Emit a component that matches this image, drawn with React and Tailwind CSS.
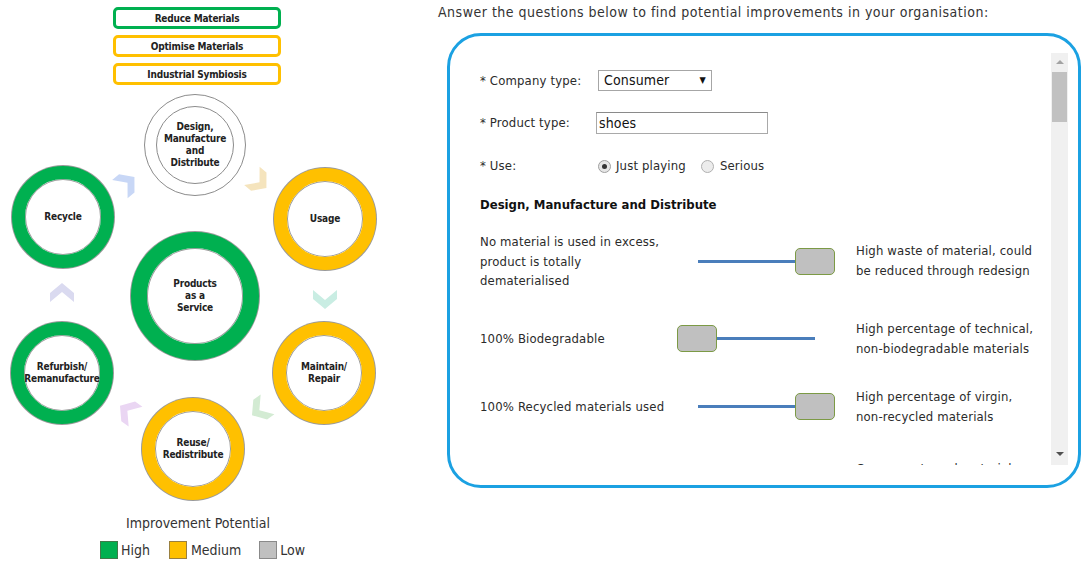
import React from "react";

const sans = "font-['DejaVu_Sans_Condensed','DejaVu_Sans',sans-serif] [font-stretch:condensed]";

const stages = [
  { lines: ["Recycle"], pos: "left-[12px] top-[75px]", color: "border-[#00b050]" },
  { lines: ["Usage"], pos: "left-[274px] top-[77px]", color: "border-[#ffc000]" },
  { lines: ["Refurbish/", "Remanufacture"], pos: "left-[11px] top-[231px]", color: "border-[#00b050]" },
  { lines: ["Maintain/", "Repair"], pos: "left-[273px] top-[231px]", color: "border-[#ffc000]" },
  { lines: ["Reuse/", "Redistribute"], pos: "left-[142px] top-[307px]", color: "border-[#ffc000]" },
];

// chevrons between the stages: [x, y, rotation, fill]
const arrows = [
  [126, 93, -40, "#c8d7f6"],
  [258, 90, 40, "#f5e4bd"],
  [325, 207, 90, "#c9ede3"],
  [261, 318, 145, "#d3ebd3"],
  [129, 321, -145, "#ead6f3"],
  [62, 203, -90, "#dadaf0"],
];

const strategies = [
  { name: "Reduce Materials", border: "border-[#00b050]" },
  { name: "Optimise Materials", border: "border-[#ffc000]" },
  { name: "Industrial Symbiosis", border: "border-[#ffc000]" },
];

const questions = [
  {
    left: "No material is used in excess, product is totally dematerialised",
    right: "High waste of material, could be reduced through redesign",
    atEnd: true,
    gap: "mt-[18px]",
  },
  {
    left: "100% Biodegradable",
    right: "High percentage of technical, non-biodegradable materials",
    atEnd: false,
    gap: "mt-[28px]",
  },
  {
    left: "100% Recycled materials used",
    right: "High percentage of virgin, non-recycled materials",
    atEnd: true,
    gap: "mt-[28px]",
  },
  {
    left: "Easy to disassemble",
    right: "Components and materials cannot be separated for recovery at end of life",
    atEnd: true,
    gap: "mt-[32px]",
  },
];

const Ring = ({ lines, pos, color }) => (
  <div
    className={`absolute ${pos} w-[102px] h-[102px] rounded-full border-[13px] ${color} bg-white shadow-[0_0_0_1px_#9a9a9a,inset_0_0_0_1px_#9a9a9a] flex items-center justify-center`}
  >
    <div className="text-center text-[10px] leading-[12px] font-bold tracking-[-0.2px] text-[#222] whitespace-nowrap">
      {lines.map((l) => (
        <div key={l}>{l}</div>
      ))}
    </div>
  </div>
);

const Slider = ({ atEnd }) => (
  <div className="relative w-[158px] h-[27px] shrink-0">
    <div className="absolute left-[21px] right-[20px] top-[12px] h-[3px] bg-[#4a7ebb]" />
    <div
      className={`absolute top-0 w-[40px] h-[27px] rounded-[5px] bg-[#c0c0c0] border-[1.5px] border-[#7c9a45] ${
        atEnd ? "left-[118px]" : "left-0"
      }`}
    />
  </div>
);

const Cycle = () => (
  <div className="w-[400px] shrink-0">
    <div className="ml-[113px] w-[168px] pt-[7px] flex flex-col gap-[6px]">
      {strategies.map((s) => (
        <div
          key={s.name}
          className={`h-[22px] rounded-[5px] border-[3px] ${s.border} flex items-center justify-center text-[10px] tracking-[-0.2px] font-bold text-[#222]`}
        >
          {s.name}
        </div>
      ))}
    </div>

    <div className="relative h-[410px] mt-[6px]">
      <svg className="absolute inset-0" width="400" height="410">
        {arrows.map(([x, y, r, fill], i) => (
          <polygon
            key={i}
            points="-8,-12 1,-12 11,0 1,12 -8,12 2,0"
            fill={fill}
            transform={`translate(${x} ${y}) rotate(${r})`}
          />
        ))}
      </svg>

      {/* Design stage has no rating, just two grey outlines */}
      <div className="absolute left-[144px] top-[3px] w-[102px] h-[102px] rounded-full border border-[#8c8c8c] bg-white flex items-center justify-center">
        <div className="w-[78px] h-[78px] rounded-full border border-[#8c8c8c] flex items-center justify-center text-center text-[10px] leading-[12px] font-bold tracking-[-0.2px] text-[#222]">
          <div>
            Design,
            <br />
            Manufacture
            <br />
            and
            <br />
            Distribute
          </div>
        </div>
      </div>

      <div className="absolute left-[131px] top-[141px] w-[128px] h-[128px] rounded-full border-[16px] border-[#00b050] bg-white shadow-[0_0_0_1px_#9a9a9a,inset_0_0_0_1px_#9a9a9a] flex items-center justify-center">
        <div className="text-center text-[10px] leading-[12px] font-bold tracking-[-0.2px] text-[#222]">
          Products
          <br />
          as a
          <br />
          Service
        </div>
      </div>

      {stages.map((s) => (
        <Ring key={s.lines[0]} {...s} />
      ))}
    </div>

    <div className="ml-[98px] w-[200px] mt-[14px] text-center text-[14px] leading-[16px] text-[#333]">
      Improvement Potential
    </div>
    <div className="ml-[100px] mt-[10px] flex items-center text-[14px] leading-[18px] text-[#333]">
      <span className="w-[18px] h-[18px] bg-[#00b050] border border-[#3f7a4a]" />
      <span className="ml-[3px]">High</span>
      <span className="ml-[19px] w-[18px] h-[18px] bg-[#ffc000] border border-[#9a8040]" />
      <span className="ml-[4px]">Medium</span>
      <span className="ml-[18px] w-[18px] h-[18px] bg-[#c0c0c0] border border-[#8a8a8a]" />
      <span className="ml-[3px]">Low</span>
    </div>
  </div>
);

const Questionnaire = () => (
  <div className="pl-[38px]">
    <p className="pt-[4px] text-[14px] leading-[16px] tracking-[0.5px] text-[#333]">
      Answer the questions below to find potential improvements in your organisation:
    </p>

    <div className="ml-[9px] mt-[13px] w-[634px] h-[455px] rounded-[34px] border-[3px] border-[#1ba1e2] pt-[17px] pr-[10px] flex">
      <div className="flex-1 h-[412px] overflow-hidden pl-[30px] text-[13px] tracking-[0.15px] text-[#2b2b2b]">
        <div className="mt-[17px] flex items-center h-[21px]">
          <span className="w-[118px]">* Company type:</span>
          <div className="w-[114px] h-[21px] border border-[#a6a6a6] bg-white flex items-center justify-between px-[5px] text-[14px] text-[#111]">
            <span>Consumer</span>
            <span className="text-[9px]">▼</span>
          </div>
        </div>

        <div className="mt-[21px] flex items-center h-[22px]">
          <span className="w-[116px]">* Product type:</span>
          <div className="w-[172px] h-[22px] border border-[#a9a9a9] border-t-[#8a8a8a] bg-white flex items-center px-[2px] text-[14px] text-[#111]">
            shoes
          </div>
        </div>

        <div className="mt-[22px] flex items-center h-[20px]">
          <span className="w-[118px]">* Use:</span>
          <span className="w-[13px] h-[13px] rounded-full border border-[#a0a0a0] bg-[#e6e6e6] flex items-center justify-center">
            <span className="w-[5px] h-[5px] rounded-full bg-[#333]" />
          </span>
          <span className="ml-[5px]">Just playing</span>
          <span className="ml-[15px] w-[13px] h-[13px] rounded-full border border-[#b0b0b0] bg-[#ececec]" />
          <span className="ml-[6px]">Serious</span>
        </div>

        <h3 className="mt-[20px] h-[18px] leading-[18px] text-[13px] tracking-normal font-bold text-[#111]">
          Design, Manufacture and Distribute
        </h3>

        {questions.map((q) => (
          <div key={q.left} className={`${q.gap} flex items-center`}>
            <p className="w-[197px] shrink-0 pr-[10px] leading-[19.5px]">{q.left}</p>
            <Slider atEnd={q.atEnd} />
            <p className="ml-[21px] w-[178px] leading-[20px]">{q.right}</p>
          </div>
        ))}
      </div>

      {/* scrollbar */}
      <div className="w-[17px] h-[412px] bg-[#f0f0f0] flex flex-col items-center">
        <div className="h-[17px] flex items-center justify-center">
          <span className="w-0 h-0 border-x-[4px] border-x-transparent border-b-[4px] border-b-[#a3a3a3]" />
        </div>
        <div className="mt-[2px] w-[15px] h-[50px] bg-[#c1c1c1]" />
        <div className="flex-1" />
        <div className="h-[22px] flex items-center justify-center">
          <span className="w-0 h-0 border-x-[4px] border-x-transparent border-t-[4px] border-t-[#505050]" />
        </div>
      </div>
    </div>
  </div>
);

export default function App() {
  return (
    <div className={`w-[1081px] h-[561px] overflow-hidden bg-white flex ${sans}`}>
      <Cycle />
      <Questionnaire />
    </div>
  );
}
